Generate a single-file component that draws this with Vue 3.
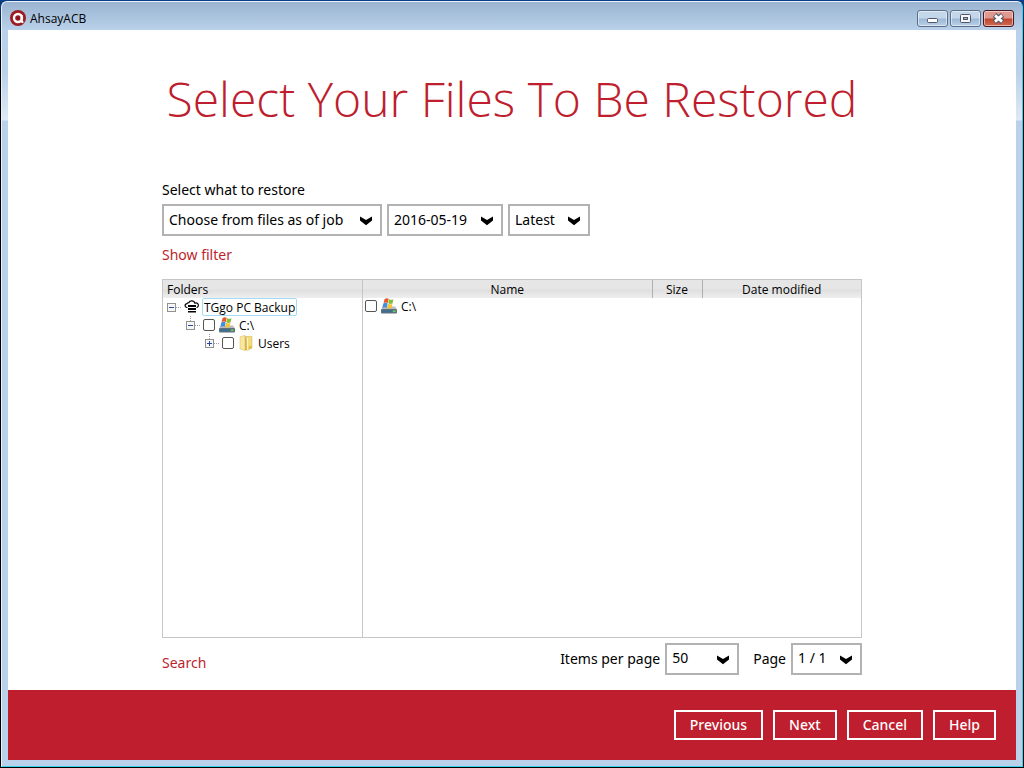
<template>
  <div class="desktop">
    <div class="window">
      <header class="titlebar">
        <svg class="logo" viewBox="0 0 16 16" aria-hidden="true">
          <circle cx="8" cy="8" r="8" fill="#9c1c22" />
          <circle cx="8" cy="8" r="4" fill="none" stroke="#fff" stroke-width="2.4" />
          <path d="M11.6 5v5.200q0 2.200 1.800 2" fill="none" stroke="#fff" stroke-width="2.200" />
          <circle cx="8" cy="8" r="1.200" fill="#7d1419" />
        </svg>
        <span class="app-name">AhsayACB</span>
        <div class="window-controls">
          <button class="control" aria-label="Minimize">
            <svg viewBox="0 0 31 17">
              <rect x="10.500" y="8.500" width="10" height="4" rx="1" fill="#fff" stroke="#535666" />
            </svg>
          </button>
          <button class="control" aria-label="Maximize">
            <svg viewBox="0 0 31 17">
              <rect x="10.500" y="4.500" width="10" height="8" rx="1" fill="#f4f6f8" stroke="#535666" />
              <rect x="13.500" y="7.500" width="4" height="2" fill="#8fb0d4" stroke="#535666" />
            </svg>
          </button>
          <button class="control close" aria-label="Close">
            <svg viewBox="0 0 31 17">
              <path d="M11.500 5l8 7M19.500 5l-8 7" stroke="#535666" stroke-width="5" />
              <path d="M12 5.400l7 6.200M19 5.400l-7 6.200" stroke="#fff" stroke-width="2.800" />
            </svg>
          </button>
        </div>
      </header>

      <div class="client">
        <main class="content">
          <h1>Select Your Files To Be Restored</h1>

          <label class="field-label" for="restore-mode">Select what to restore</label>
          <div class="filters">
            <div v-for="f in filters" :key="f.id" :class="['dropdown', f.id]">
              <select :id="f.id" :aria-label="f.label">
                <option>{{ f.value }}</option>
              </select>
              <svg class="chevron" viewBox="0 0 13 10"><path d="M0 0L6.500 4L13 0V4.500L6.500 9.500L0 4.500Z" /></svg>
            </div>
          </div>
          <a class="link" href="#">Show filter</a>

          <div class="browser">
            <section class="folders">
              <h2>Folders</h2>
              <ul class="tree">
                <li v-for="node in nodes" :key="node.name" :class="['node', 'level-' + node.level]">
                  <button class="toggle" :aria-label="'Toggle ' + node.name">
                    <svg viewBox="0 0 9 9">
                      <rect x="0.500" y="0.500" width="8" height="8" fill="#f6f6f6" stroke="#919191" />
                      <path d="M2 4.500h5" stroke="#2b4a9b" />
                      <path v-if="!node.open" d="M4.500 2v5" stroke="#2b4a9b" />
                    </svg>
                  </button>
                  <span class="dots"></span>
                  <input v-if="node.level > 1" :id="'node-' + node.level" type="checkbox" />
                  <svg v-if="node.icon === 'cloud'" class="icon" viewBox="0 0 16 16">
                    <path d="M3.500 8.500H3A1.900 1.900 0 0 1 3 4.700Q3.300 3.500 4.800 3.600A3.400 3.400 0 0 1 11 4.200 2.200 2.200 0 0 1 13 8.500H12.500" fill="none" stroke="#000" stroke-width="1.200" />
                    <path d="M4 6h8v2H4zM4 9h8v2H4zM4 12h8v1.500H4z" />
                  </svg>
                  <svg v-else-if="node.icon === 'drive'" class="icon"><use href="#drive" /></svg>
                  <svg v-else class="icon" viewBox="0 0 16 16">
                    <path d="M2 1.500L7 .5v15L2 14z" fill="#f7e7a0" stroke="#d9b957" stroke-width=".5" />
                    <path d="M7 1l2 1v13l-2 .5z" fill="#d9b552" />
                    <path d="M8 1.500h6v11.500L9 15.500z" fill="#f3dc80" stroke="#d5b14b" stroke-width=".5" />
                    <path d="M9 3l1-.5v12l-1 .8z" fill="#fff5c3" />
                    <path d="M11 11h3v2l-3 1.500z" fill="#e3bd4a" />
                  </svg>
                  <label v-if="node.level > 1" :for="'node-' + node.level">{{ node.name }}</label>
                  <span v-else class="selected">{{ node.name }}</span>
                </li>
              </ul>
            </section>

            <div class="files">
              <table>
                <thead>
                  <tr>
                    <th>Name</th>
                    <th class="size">Size</th>
                    <th class="date">Date modified</th>
                  </tr>
                </thead>
                <tbody>
                  <tr>
                    <td>
                      <div class="file">
                        <input id="file-c" type="checkbox" />
                        <svg class="icon"><use href="#drive" /></svg>
                        <label for="file-c">C:\</label>
                      </div>
                    </td>
                    <td></td>
                    <td></td>
                  </tr>
                </tbody>
              </table>
            </div>
          </div>

          <div class="pager">
            <a class="link" href="#">Search</a>
            <label for="per-page">Items per page</label>
            <div class="dropdown per-page">
              <select id="per-page"><option>50</option></select>
              <svg class="chevron" viewBox="0 0 13 10"><path d="M0 0L6.500 4L13 0V4.500L6.500 9.500L0 4.500Z" /></svg>
            </div>
            <label class="page-label" for="page">Page</label>
            <div class="dropdown page">
              <select id="page"><option>1 / 1</option></select>
              <svg class="chevron" viewBox="0 0 13 10"><path d="M0 0L6.500 4L13 0V4.500L6.500 9.500L0 4.500Z" /></svg>
            </div>
          </div>
        </main>

        <footer class="actions">
          <button v-for="a in actions" :key="a">{{ a }}</button>
        </footer>
      </div>
    </div>

    <svg class="sprite" aria-hidden="true">
      <symbol id="drive" viewBox="0 0 16 16">
        <path d="M2 8.500h12l2 3H0z" fill="#b9bcbe" />
        <rect x="0" y="11" width="16" height="4.500" rx="1" fill="#65717a" />
        <rect x="1" y="12" width="10" height="2.500" fill="#3f6f8f" />
        <rect x="12" y="12.500" width="2.500" height="1.500" fill="#4fe05a" />
        <path d="M3.500 1.200Q5.500-.6 7.700.8L6.800 4.900Q4.800 3.800 2.600 5.100z" fill="#e8592b" />
        <path d="M8.100 1.200q2.200 1 4.400 0l-1 4.200q-2.200 1-4.200-.1z" fill="#86bd3c" />
        <path d="M2.300 5.500q2.400-1.300 4.400-.1l-1 4.400q-2-1.200-4.400.1z" fill="#3f8fdc" />
        <path d="M7.100 5.800q2.200 1.100 4.300.1l-1 4.200q-2.200 1-4.200-.1z" fill="#f6c22f" />
      </symbol>
    </svg>
  </div>
</template>

<script setup>
const filters = [
  { id: 'restore-mode', label: 'Select what to restore', value: 'Choose from files as of job' },
  { id: 'job-date', label: 'Job date', value: '2016-05-19' },
  { id: 'job-time', label: 'Job time', value: 'Latest' }
]

const nodes = [
  { name: 'TGgo PC Backup', level: 1, icon: 'cloud', open: true },
  { name: 'C:\\', level: 2, icon: 'drive', open: true },
  { name: 'Users', level: 3, icon: 'folder', open: false }
]

const actions = ['Previous', 'Next', 'Cancel', 'Help']
</script>

<style>
body {
  background: #000;
}
</style>

<style scoped>
* {
  box-sizing: border-box;
}

.desktop {
  display: flex;
  min-height: 100vh;
  padding: 1px;
  background: linear-gradient(#0b3f86, #04182f 30px, #000 60px);
  font-family: "Noto Sans", "Open Sans", sans-serif;
  font-size: 14px;
  color: #000;
}

.window {
  flex: 1;
  display: flex;
  flex-direction: column;
  padding: 0 6px 6px;
  border: 1px solid #35d0ea;
  border-top-color: #e9f2fa;
  border-left-color: #e9f2fa;
  border-radius: 6px 6px 0 0;
  background: linear-gradient(#9ab4d1, #b9d1ea 28px, #b9d1ea 70px, #dfe9f5 118px, #b9d1ea 119px);
}

.titlebar {
  display: flex;
  align-items: center;
  height: 28px;
  padding: 4px 2px 0;
}

.logo {
  width: 16px;
  height: 16px;
  margin-right: 4px;
}

.app-name {
  font-family: "Open Sans", sans-serif;
  font-size: 12px;
}

.window-controls {
  display: flex;
  gap: 2px;
  margin-left: auto;
}

.control {
  width: 31px;
  height: 17px;
  padding: 0;
  border: 1px solid #5c6f87;
  border-radius: 3px;
  box-shadow: inset 0 0 0 1px rgba(255, 255, 255, 0.5);
  background: linear-gradient(#c3d6ea 48%, #9cb8d6 52%, #b9d0e8);
}

.control.close {
  border-color: #4a1420;
  background: linear-gradient(#e0998f 48%, #c0442c 52%, #cf6a52);
}

.control svg {
  display: block;
  width: 31px;
  height: 17px;
  margin: -1px;
}

.client {
  flex: 1;
  display: flex;
  flex-direction: column;
  background: #fff;
}

.content {
  flex: 1;
  display: flex;
  flex-direction: column;
  align-items: flex-start;
  width: 100%;
  max-width: 700px;
  margin: 0 auto;
  padding-bottom: 15px;
}

h1 {
  align-self: center;
  margin: 36px 0 48px;
  font-family: "Open Sans", sans-serif;
  font-size: 48px;
  font-weight: 300;
  line-height: 66px;
  white-space: nowrap;
  color: #be1e2d;
}

.field-label {
  line-height: 20px;
}

.filters {
  display: flex;
  gap: 5px;
  margin: 4px 0 9px;
}

.dropdown {
  display: grid;
  grid-template-columns: 1fr 13px;
  align-items: center;
}

.dropdown select {
  grid-area: 1 / 1 / 2 / 3;
  width: 100%;
  height: 32px;
  padding: 0 5px 2px;
  border: 2px solid #b2b2b2;
  border-radius: 0;
  background: #fff;
  color: #000;
  font: inherit;
  appearance: none;
}

.chevron {
  grid-area: 1 / 2;
  width: 12px;
  height: 10px;
  margin: 2px 0 0 -9px;
  pointer-events: none;
}

.restore-mode {
  width: 220px;
}

.job-date {
  width: 116px;
}

.job-time {
  width: 82px;
}

.link {
  line-height: 20px;
  color: #be1e2d;
  text-decoration: none;
}

.browser {
  flex: 1;
  display: flex;
  align-self: stretch;
  margin: 14px 0 5px;
  border: 1px solid #c5c5c5;
  font-family: "Open Sans", sans-serif;
  font-size: 12px;
}

.folders {
  width: 200px;
  border-right: 1px solid #c5c5c5;
}

h2,
th {
  height: 18px;
  margin: 0;
  padding: 2px 4px 0;
  background: linear-gradient(#e6e6e6 50%, #dedede 55%, #efefef);
  font-size: 12px;
  font-weight: 400;
  line-height: 16px;
}

.tree {
  margin: 0;
  padding: 0;
  list-style: none;
}

.node,
.file {
  display: flex;
  align-items: center;
  height: 18px;
}

.node {
  padding-left: 4px;
}

.level-2 {
  padding-left: 23px;
}

.level-3 {
  padding-left: 42px;
}

.toggle {
  position: relative;
  width: 9px;
  height: 9px;
  padding: 0;
  border: 0;
  background: none;
}

.toggle svg {
  display: block;
  width: 9px;
  height: 9px;
}

.level-2 .toggle::before,
.level-3 .toggle::before {
  content: "";
  position: absolute;
  left: 4px;
  bottom: 9px;
  height: 5px;
  border-left: 1px dotted #a0a0a0;
}

.dots {
  width: 5px;
  margin-right: 3px;
  border-top: 1px dotted #a0a0a0;
}

input[type="checkbox"] {
  width: 12px;
  height: 12px;
  margin: 0 4px 0 0;
  border: 1px solid #555;
  border-radius: 2px;
  background: #fff;
  appearance: none;
}

input[type="checkbox"]:checked {
  background: #be1e2d;
}

.icon {
  width: 16px;
  height: 16px;
  margin-right: 4px;
}

.level-1 .icon {
  margin-right: 2px;
}

.selected {
  height: 18px;
  padding: 0 1px;
  border: 1px solid #a5dcf5;
  border-radius: 2px;
  line-height: 17px;
}

.files {
  flex: 1;
}

table {
  width: 100%;
  border-collapse: collapse;
  table-layout: fixed;
}

th + th {
  border-left: 1px solid #b0b0b0;
}

.size {
  width: 50px;
}

.date {
  width: 159px;
}

td {
  padding: 0;
}

.file {
  height: 16px;
  padding-left: 2px;
}

.pager {
  display: flex;
  align-items: center;
  align-self: stretch;
  gap: 5px;
  line-height: 20px;
}

.pager .link {
  margin-right: auto;
  padding-top: 8px;
}

.page-label {
  margin-left: 9px;
}

.per-page {
  width: 74px;
}

.page {
  width: 71px;
}

.actions {
  display: flex;
  align-items: center;
  justify-content: flex-end;
  gap: 10px;
  height: 70px;
  padding: 0 20px;
  background: #be1e2d;
}

.actions button {
  height: 30px;
  padding: 0 14px 2px;
  border: 2px solid #fff;
  background: transparent;
  color: #fff;
  font-family: inherit;
  font-size: 14px;
  font-weight: 500;
  cursor: pointer;
}

.sprite {
  position: absolute;
  width: 0;
  height: 0;
}
</style>
